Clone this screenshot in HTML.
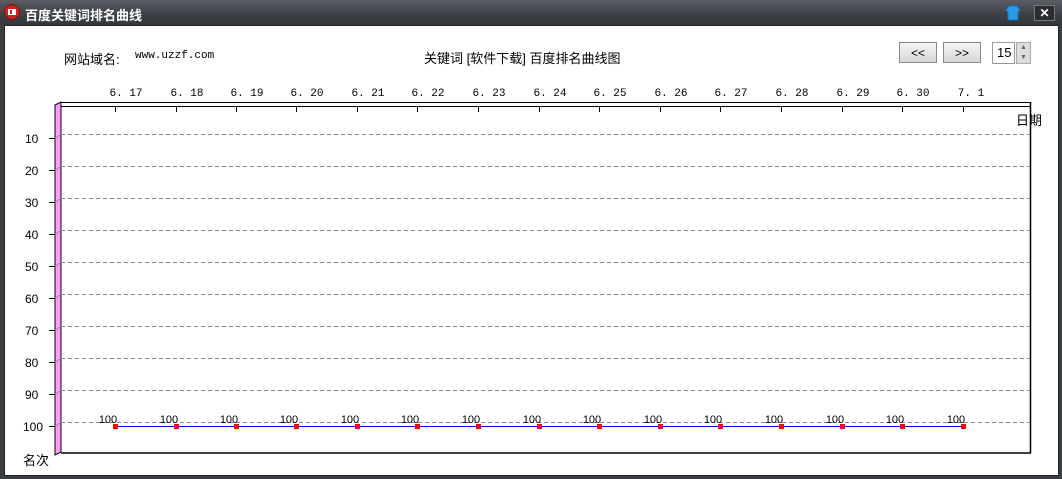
<!DOCTYPE html>
<html><head><meta charset="utf-8"><style>
body{margin:0;width:1062px;height:479px;overflow:hidden;background:#3a3d42;font-family:"Liberation Sans","Noto Sans CJK SC",sans-serif;}
.title{position:absolute;left:0;top:0;width:1062px;height:25px;background:linear-gradient(#5a5e64,#3c4046 60%,#34373c);}
.client{position:absolute;left:4px;top:25px;width:1053px;height:449px;background:#fff;border:1px solid #222;}
.t{position:absolute;font-size:12px;color:#000;white-space:nowrap;}
.btn{position:absolute;top:42px;width:38px;height:21px;border:1px solid #8a8a8a;background:linear-gradient(#f4f4f4,#d8d8d8);font-size:12px;text-align:center;line-height:20px;box-sizing:border-box;}
</style></head><body>
<div class="title"></div>
<svg style="position:absolute;left:4px;top:4px" width="16" height="16"><circle cx="8" cy="8" r="7.5" fill="#c8231c" stroke="#7a0e0a"/><rect x="4" y="5" width="8" height="6" fill="#fff"/><rect x="6" y="6" width="2" height="4" fill="#c8231c"/></svg>
<div class="t" style="left:25px;top:5px;color:#fff;font-weight:bold;font-size:13px">百度关键词排名曲线</div>
<svg style="position:absolute;left:1005px;top:5px" width="16" height="16"><path d="M4 1 L12 1 L15 5 L13 7 L13 15 L3 15 L3 7 L1 5 Z" fill="#2b9be8" stroke="#1a6fb5"/></svg>
<div style="position:absolute;left:1034px;top:5px;width:19px;height:14px;background:#2a2c30;border:1px solid #777;color:#fff;font-size:12px;text-align:center;line-height:14px;font-weight:bold">✕</div>
<div class="client"></div>
<div class="t" style="left:64px;top:49px;font-size:13px">网站域名:</div>
<div class="t" style="left:135px;top:50px;font-family:'Liberation Mono',monospace;font-size:11px">www.uzzf.com</div>
<div class="t" style="left:424px;top:48px;font-size:13px">关键词 [软件下载] 百度排名曲线图</div>
<div class="btn" style="left:899px">&lt;&lt;</div>
<div class="btn" style="left:943px">&gt;&gt;</div>
<div style="position:absolute;left:992px;top:42px;width:23px;height:22px;border:1px solid #999;box-sizing:border-box;font-size:13px;line-height:20px;padding-left:4px;background:#fff">15</div>
<div style="position:absolute;left:1016px;top:42px;width:15px;height:22px;background:#ddd;border:1px solid #aaa;box-sizing:border-box;font-size:7px;text-align:center;line-height:10px;color:#666">▲<br>▼</div>
<svg style="position:absolute;left:0;top:0" width="1062" height="479" font-family="Liberation Sans, Noto Sans CJK SC, sans-serif" font-size="12">
<polygon points="55,105 61,102 61,452 55,455" fill="#ff9cf8" stroke="#000"/>
<line x1="61" y1="102.5" x2="1031" y2="102.5" stroke="#000"/>
<line x1="61" y1="106.5" x2="1031" y2="106.5" stroke="#000"/>
<line x1="1030.5" y1="102" x2="1030.5" y2="453" stroke="#000" stroke-width="1.5"/>
<line x1="61" y1="453" x2="1031" y2="453" stroke="#000" stroke-width="1.5"/>
<g stroke="#000">
<line x1="115.5" y1="106" x2="115.5" y2="112"/><line x1="176.5" y1="106" x2="176.5" y2="112"/><line x1="236.5" y1="106" x2="236.5" y2="112"/><line x1="296.5" y1="106" x2="296.5" y2="112"/><line x1="357.5" y1="106" x2="357.5" y2="112"/><line x1="417.5" y1="106" x2="417.5" y2="112"/><line x1="478.5" y1="106" x2="478.5" y2="112"/><line x1="539.5" y1="106" x2="539.5" y2="112"/><line x1="599.5" y1="106" x2="599.5" y2="112"/><line x1="660.5" y1="106" x2="660.5" y2="112"/><line x1="720.5" y1="106" x2="720.5" y2="112"/><line x1="781.5" y1="106" x2="781.5" y2="112"/><line x1="842.5" y1="106" x2="842.5" y2="112"/><line x1="902.5" y1="106" x2="902.5" y2="112"/><line x1="963.5" y1="106" x2="963.5" y2="112"/>
</g>
<g font-family="Liberation Mono, monospace" font-size="11" text-anchor="middle">
<text x="126" y="96">6. 17</text><text x="187" y="96">6. 18</text><text x="247" y="96">6. 19</text><text x="307" y="96">6. 20</text><text x="368" y="96">6. 21</text><text x="428" y="96">6. 22</text><text x="489" y="96">6. 23</text><text x="550" y="96">6. 24</text><text x="610" y="96">6. 25</text><text x="671" y="96">6. 26</text><text x="731" y="96">6. 27</text><text x="792" y="96">6. 28</text><text x="853" y="96">6. 29</text><text x="913" y="96">6. 30</text><text x="971" y="96">7. 1</text>
</g>
<g stroke="#888" stroke-dasharray="4,3">
<line x1="61" y1="134.5" x2="1030" y2="134.5"/><line x1="61" y1="166.5" x2="1030" y2="166.5"/><line x1="61" y1="198.5" x2="1030" y2="198.5"/><line x1="61" y1="230.5" x2="1030" y2="230.5"/><line x1="61" y1="262.5" x2="1030" y2="262.5"/><line x1="61" y1="294.5" x2="1030" y2="294.5"/><line x1="61" y1="326.5" x2="1030" y2="326.5"/><line x1="61" y1="358.5" x2="1030" y2="358.5"/><line x1="61" y1="390.5" x2="1030" y2="390.5"/><line x1="61" y1="422.5" x2="1030" y2="422.5"/>
</g>
<g stroke="#888">
<line x1="55" y1="138.5" x2="61" y2="134.5"/><line x1="55" y1="170.5" x2="61" y2="166.5"/><line x1="55" y1="202.5" x2="61" y2="198.5"/><line x1="55" y1="234.5" x2="61" y2="230.5"/><line x1="55" y1="266.5" x2="61" y2="262.5"/><line x1="55" y1="298.5" x2="61" y2="294.5"/><line x1="55" y1="330.5" x2="61" y2="326.5"/><line x1="55" y1="362.5" x2="61" y2="358.5"/><line x1="55" y1="394.5" x2="61" y2="390.5"/><line x1="55" y1="426.5" x2="61" y2="422.5"/>
</g>
<g stroke="#000">
<line x1="49" y1="138.5" x2="55" y2="138.5"/><line x1="49" y1="170.5" x2="55" y2="170.5"/><line x1="49" y1="202.5" x2="55" y2="202.5"/><line x1="49" y1="234.5" x2="55" y2="234.5"/><line x1="49" y1="266.5" x2="55" y2="266.5"/><line x1="49" y1="298.5" x2="55" y2="298.5"/><line x1="49" y1="330.5" x2="55" y2="330.5"/><line x1="49" y1="362.5" x2="55" y2="362.5"/><line x1="49" y1="394.5" x2="55" y2="394.5"/><line x1="49" y1="426.5" x2="55" y2="426.5"/>
</g>
<text x="25" y="143">10</text><text x="25" y="175">20</text><text x="25" y="207">30</text><text x="25" y="239">40</text><text x="25" y="271">50</text><text x="25" y="303">60</text><text x="25" y="335">70</text><text x="25" y="367">80</text><text x="25" y="399">90</text><text x="23" y="431">100</text>
<line x1="115" y1="426.5" x2="963" y2="426.5" stroke="#0000ff"/>
<g fill="#f00">
<rect x="113" y="424" width="5" height="5"/><rect x="174" y="424" width="5" height="5"/><rect x="234" y="424" width="5" height="5"/><rect x="294" y="424" width="5" height="5"/><rect x="355" y="424" width="5" height="5"/><rect x="415" y="424" width="5" height="5"/><rect x="476" y="424" width="5" height="5"/><rect x="537" y="424" width="5" height="5"/><rect x="597" y="424" width="5" height="5"/><rect x="658" y="424" width="5" height="5"/><rect x="718" y="424" width="5" height="5"/><rect x="779" y="424" width="5" height="5"/><rect x="840" y="424" width="5" height="5"/><rect x="900" y="424" width="5" height="5"/><rect x="961" y="424" width="5" height="5"/>
</g>
<g text-anchor="middle" font-size="11">
<text x="108" y="423">100</text><text x="169" y="423">100</text><text x="229" y="423">100</text><text x="289" y="423">100</text><text x="350" y="423">100</text><text x="410" y="423">100</text><text x="471" y="423">100</text><text x="532" y="423">100</text><text x="592" y="423">100</text><text x="653" y="423">100</text><text x="713" y="423">100</text><text x="774" y="423">100</text><text x="835" y="423">100</text><text x="895" y="423">100</text><text x="956" y="423">100</text>
</g>
<text x="1016" y="125" font-size="13">日期</text>
<text x="23" y="465" font-size="13">名次</text>
</svg>
</body></html>
